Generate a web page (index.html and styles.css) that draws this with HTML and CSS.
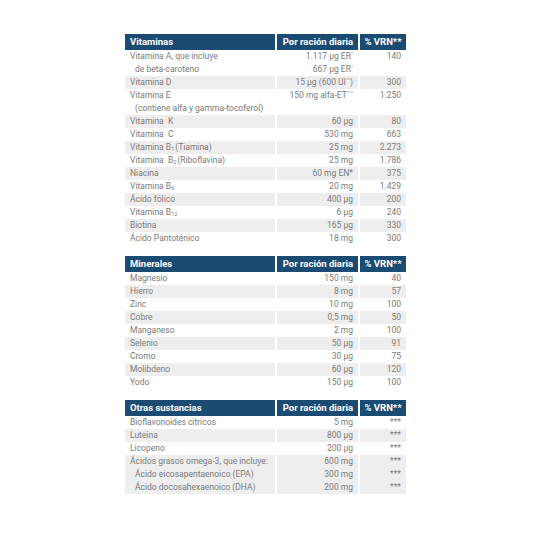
FILE: index.html
```html
<!DOCTYPE html>
<html lang="es">
<head>
  <meta charset="UTF-8" />
  <title>Información nutricional</title>
  <link rel="stylesheet" href="styles.css">
</head>
<body>
  <div class="sheet">
    <table class="nutri">
      <tr class="head">
        <th class="name">Vitaminas</th>
        <th class="amount">Por ración diaria</th>
        <th class="vrn">% VRN**</th>
      </tr>
      <tr>
        <td>Vitamina A, que incluye<br><span class="sub-line">de beta-caroteno</span></td>
        <td class="amount">1.117 µg ER<sup>°</sup><br>667 µg ER<sup>°</sup></td>
        <td class="vrn">140<br>&nbsp;</td>
      </tr>
      <tr><td>Vitamina D</td><td class="amount">15 µg (600 UI<sup>°°</sup>)</td><td class="vrn">300</td></tr>
      <tr>
        <td>Vitamina E<br><span class="sub-line">(contiene alfa y gamma-tocoferol)</span></td>
        <td class="amount">150 mg alfa-ET<sup>°°°</sup><br>&nbsp;</td>
        <td class="vrn">1.250<br>&nbsp;</td>
      </tr>
      <tr><td>Vitamina &nbsp;K</td><td class="amount">60 µg</td><td class="vrn">80</td></tr>
      <tr><td>Vitamina &nbsp;C</td><td class="amount">530 mg</td><td class="vrn">663</td></tr>
      <tr><td>Vitamina B<sub>1</sub>(Tiamina)</td><td class="amount">25 mg</td><td class="vrn">2.273</td></tr>
      <tr><td>Vitamina &nbsp;B<sub>2</sub>(Riboflavina)</td><td class="amount">25 mg</td><td class="vrn">1.786</td></tr>
      <tr><td>Niacina</td><td class="amount">60 mg EN*</td><td class="vrn">375</td></tr>
      <tr><td>Vitamina B<sub>6</sub></td><td class="amount">20 mg</td><td class="vrn">1.429</td></tr>
      <tr><td>Ácido fólico</td><td class="amount">400 µg</td><td class="vrn">200</td></tr>
      <tr><td>Vitamina B<sub>12</sub></td><td class="amount">6 µg</td><td class="vrn">240</td></tr>
      <tr><td>Biotina</td><td class="amount">165 µg</td><td class="vrn">330</td></tr>
      <tr><td>Ácido Pantoténico</td><td class="amount">18 mg</td><td class="vrn">300</td></tr>
    </table>

    <table class="nutri">
      <tr class="head">
        <th class="name">Minerales</th>
        <th class="amount">Por ración diaria</th>
        <th class="vrn">% VRN**</th>
      </tr>
      <tr><td>Magnesio</td><td class="amount">150 mg</td><td class="vrn">40</td></tr>
      <tr><td>Hierro</td><td class="amount">8 mg</td><td class="vrn">57</td></tr>
      <tr><td>Zinc</td><td class="amount">10 mg</td><td class="vrn">100</td></tr>
      <tr><td>Cobre</td><td class="amount">0,5 mg</td><td class="vrn">50</td></tr>
      <tr><td>Manganeso</td><td class="amount">2 mg</td><td class="vrn">100</td></tr>
      <tr><td>Selenio</td><td class="amount">50 µg</td><td class="vrn">91</td></tr>
      <tr><td>Cromo</td><td class="amount">30 µg</td><td class="vrn">75</td></tr>
      <tr><td>Molibdeno</td><td class="amount">60 µg</td><td class="vrn">120</td></tr>
      <tr><td>Yodo</td><td class="amount">150 µg</td><td class="vrn">100</td></tr>
    </table>

    <table class="nutri">
      <tr class="head">
        <th class="name">Otras sustancias</th>
        <th class="amount">Por ración diaria</th>
        <th class="vrn">% VRN**</th>
      </tr>
      <tr><td>Bioflavonoides cítricos</td><td class="amount">5 mg</td><td class="vrn stars">***</td></tr>
      <tr><td>Luteina</td><td class="amount">800 µg</td><td class="vrn stars">***</td></tr>
      <tr><td>Licopeno</td><td class="amount">200 µg</td><td class="vrn stars">***</td></tr>
      <tr>
        <td>Ácidos grasos omega-3, que incluye:<br><span class="sub-line">Ácido eicosapentaenoico (EPA)</span><br><span class="sub-line">Ácido docosahexaenoico (DHA)</span></td>
        <td class="amount">600 mg<br>300 mg<br>200 mg</td>
        <td class="vrn stars">***<br>***<br>***</td>
      </tr>
    </table>
  </div>
</body>
</html>
```

FILE: styles.css
```css
body {
  margin: 0;
  background-color: white;
  font-family: Roboto, "Liberation Sans", sans-serif;
}

.sheet {
  width: 281px;
  margin-left: 125px;
  padding-top: 34px;
}

.nutri {
  width: 100%;
  border-collapse: collapse;
  margin-bottom: 11px;
  table-layout: fixed;
}

.nutri th,
.nutri td {
  padding: 0 5px;
  border-left: 2px solid white;
  vertical-align: top;
}

.nutri th:first-child,
.nutri td:first-child {
  border-left: none;
}

.head th {
  background-color: #1b4a73;
  color: white;
  font-size: 9.5px;
  font-weight: bold;
  height: 16px;
  line-height: 16px;
  white-space: nowrap;
}

.head .name {
  width: 140px;
  text-align: left;
}

.head .amount {
  width: 71px;
}

.head .vrn {
  text-align: center;
  padding: 0;
}

.nutri td {
  font-size: 8.5px;
  line-height: 13px;
  color: #7a7a7a;
  white-space: nowrap;
}

.nutri tr:nth-child(odd) td {
  background-color: #eeeeee;
}

.amount,
.vrn {
  text-align: right;
}

.stars {
  font-size: 7px;
  color: #999;
}

.sub-line {
  padding-left: 5px;
}

sup,
sub {
  font-size: 5.5px;
  line-height: 0;
}

sup {
  vertical-align: 3px;
}

sub {
  vertical-align: -1px;
  margin-right: 1px;
}
```
